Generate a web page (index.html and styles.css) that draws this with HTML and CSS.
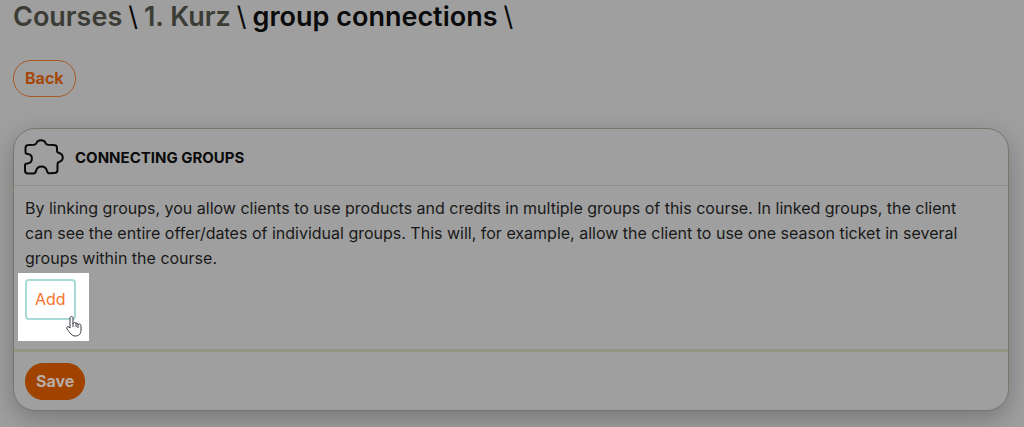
FILE: index.html
```html
<!DOCTYPE html>
<html lang="en">
<head>
    <meta charset="UTF-8">
    <meta name="viewport" content="width=device-width, initial-scale=1.0">
    <title>Group connections</title>
    <link rel="stylesheet" href="styles.css">
</head>
<body>
    <h1 class="breadcrumb">
        <a href="#">Courses</a>
        <span class="slash">\</span>
        <a href="#">1. Kurz</a>
        <span class="slash">\</span>
        <span>group connections</span>
        <span class="slash">\</span>
    </h1>

    <a class="btn btn-outline" href="#">Back</a>

    <form class="card">
        <div class="card-header">
            <svg class="puzzle" viewBox="0 0 40 36" aria-hidden="true">
                <path d="M1.5 9 Q1.5 6 4.5 6 L10 5.8 Q12 5.6 12.5 4 C13.5 .2 20.5 .2 21.5 4 Q22 5.6 24 5.8 L30 6 Q33 6 33 9 V12 Q33 13.5 35 14 C40 15.5 40 21.5 35 23 Q33.5 23.5 33.5 25 V31 Q33.5 34 30.5 34 L25.5 34.3 Q23.5 34.3 23 32 C21.5 26 13.5 26 12 32 Q11.5 34.5 9.5 34.5 H4 Q1 34.5 1 31.5 V26.5 Q1 24.5 3 24.5 C9.5 24 9.5 15.5 3.5 15 Q1.5 14.8 1.5 13 Z"/>
            </svg>
            <h2>Connecting groups</h2>
        </div>
        <div class="card-body">
            <p>By linking groups, you allow clients to use products and credits in multiple groups of this course. In linked groups, the client can see the entire offer/dates of individual groups. This will, for example, allow the client to use one season ticket in several groups within the course.</p>
            <div class="spotlight">
                <button class="btn-add" type="button">Add</button>
                <svg class="cursor" viewBox="0 0 16 21" aria-hidden="true">
                    <path d="M4 2 C4 0 7 0 7 2 V8 C7 6 10 6 10 8 C10 6 12 7 12 9 C13 7 15 8 15 10 V14 C15 18 13 20 9 20 C6 20 4 17 1 13 C0 11 2 10 3 11 L4 12 Z"/>
                    <path d="M7 8 V11 M10 8 V11 M12 9 V12"/>
                </svg>
            </div>
        </div>
        <div class="card-footer">
            <button class="btn btn-primary" type="submit">Save</button>
        </div>
    </form>
</body>
</html>
```

FILE: styles.css
```css
* {
    box-sizing: border-box;
}
body {
    margin: 0;
    padding: 0 15px 16px 13px;
    background: #9f9f9f;
    color: #191919;
    font-family: Inter, sans-serif;
    font-size: 16px;
    line-height: 25px;
}
.breadcrumb {
    display: flex;
    flex-wrap: wrap;
    gap: 0 6px;
    margin: 0 0 26px;
    font-size: 27px;
    line-height: 34px;
    font-weight: 600;
    color: #0a0a0a;
}
.breadcrumb a {
    color: #3b3c35;
    text-decoration: none;
}
.slash {
    font-weight: 400;
}
.btn {
    display: inline-block;
    padding: 0 11px;
    border: 1px solid #ac5626;
    border-radius: 18px;
    font-family: Inter, sans-serif;
    font-size: 16px;
    line-height: 35px;
    font-weight: 700;
    text-decoration: none;
}
.btn-outline {
    color: #a5480c;
}
.btn-primary {
    padding: 0 10px;
    background: #a04200;
    border-color: #a04200;
    color: #b8aca4;
}
.card {
    margin-top: 31px;
    border: 1px solid #77776c;
    border-radius: 22px;
    box-shadow: 0 8px 24px rgba(0, 0, 0, 0.25);
    background: #9f9f9f;
}
.card-header {
    display: flex;
    align-items: center;
    gap: 11px;
    height: 57px;
    padding: 0 10px;
    border-bottom: 1px solid #8d8d82;
}
.card-header h2 {
    margin: 0;
    font-size: 15px;
    font-weight: 700;
    color: #0a0a0a;
    text-transform: uppercase;
}
.puzzle {
    width: 40px;
    height: 36px;
    fill: none;
    stroke: #0a0a0a;
    stroke-width: 2;
    stroke-linejoin: round;
}
.card-body {
    padding: 10px 4px 8px;
}
.card-body p {
    margin: 0 0 2px;
    padding: 0 32px 0 7px;
}
.spotlight {
    position: relative;
    width: max-content;
    padding: 6px 13px 21px 7px;
    background: #fff;
}
.btn-add {
    display: block;
    padding: 0 8px;
    border: 2px solid #a8dbd7;
    border-radius: 4px;
    background: #fff;
    color: #f4742e;
    font-family: Inter, sans-serif;
    font-size: 16px;
    line-height: 37px;
}
.cursor {
    position: absolute;
    right: 7px;
    bottom: 4px;
    width: 16px;
    height: 21px;
    fill: #fff;
    stroke: #3a3a46;
    stroke-width: 1;
    stroke-linejoin: round;
}
.card-footer {
    padding: 11px 11px 10px;
    border-top: 3px solid #949480;
}
```
